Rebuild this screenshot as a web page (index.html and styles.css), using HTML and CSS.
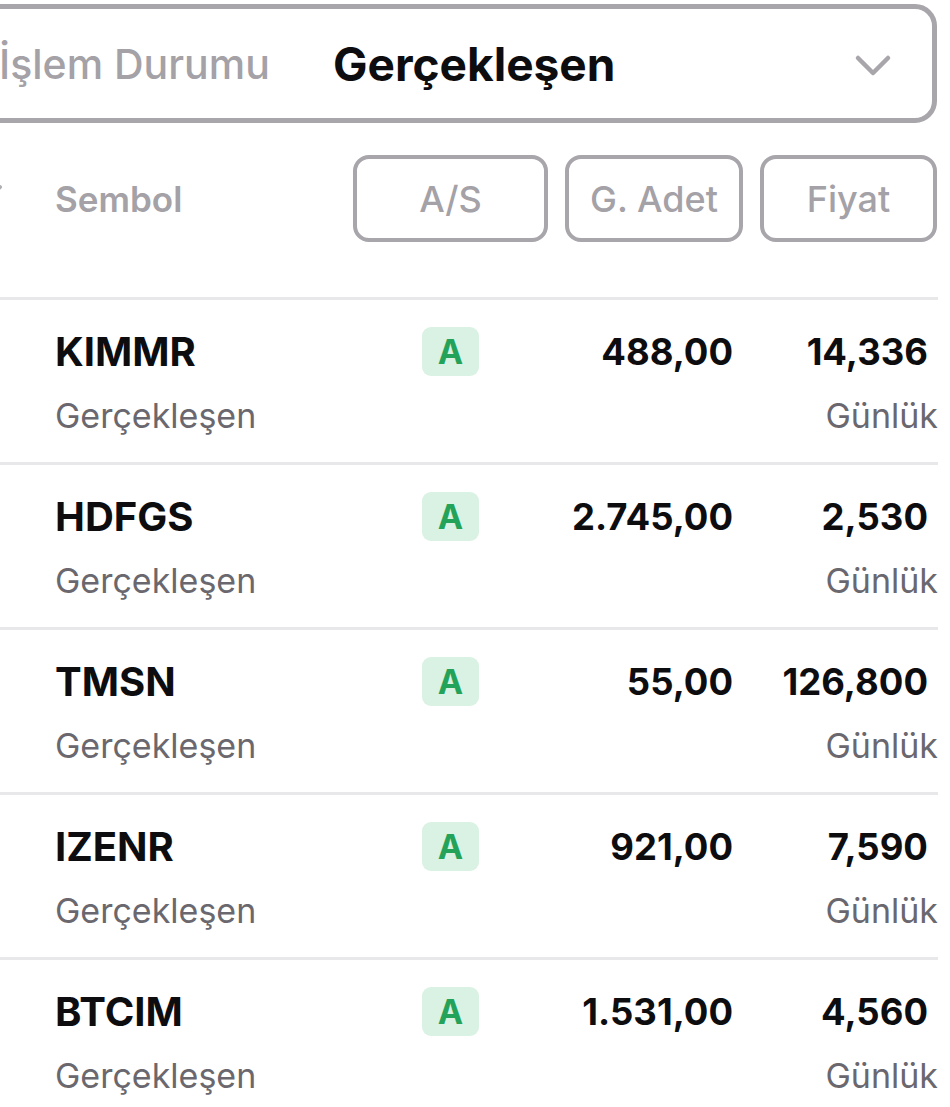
FILE: index.html
```html
<!DOCTYPE html>
<html lang="tr">
<head>
  <meta charset="UTF-8">
  <title>Emirler</title>
  <link rel="stylesheet" href="styles.css">
</head>
<body>
  <div class="screen">
    <div class="select">
      <span class="select-label">İşlem Durumu</span>
      <span class="select-value">Gerçekleşen</span>
      <svg class="chevron" width="38" height="24" viewBox="0 0 38 24">
        <path d="M4 4 L19 19 L34 4" fill="none" stroke="#a8a5ab" stroke-width="4.5" stroke-linecap="round" stroke-linejoin="round"/>
      </svg>
    </div>

    <div class="head">
      <svg class="sort-icon" width="20" height="20" viewBox="0 0 20 20">
        <path d="M4 14 L12 7" fill="none" stroke="#b0adb3" stroke-width="4" stroke-linecap="round"/>
      </svg>
      <span class="head-symbol">Sembol</span>
      <div class="head-btn btn-as">A/S</div>
      <div class="head-btn btn-qty">G. Adet</div>
      <div class="head-btn btn-price">Fiyat</div>
    </div>

    <div class="list">
      <div class="row">
        <div class="sym">KIMMR</div>
        <div class="badge">A</div>
        <div class="num">488,00</div>
        <div class="num">14,336</div>
        <div class="sub">Gerçekleşen</div>
        <div class="sub sub-right">Günlük</div>
      </div>
      <div class="row">
        <div class="sym">HDFGS</div>
        <div class="badge">A</div>
        <div class="num">2.745,00</div>
        <div class="num">2,530</div>
        <div class="sub">Gerçekleşen</div>
        <div class="sub sub-right">Günlük</div>
      </div>
      <div class="row">
        <div class="sym">TMSN</div>
        <div class="badge">A</div>
        <div class="num">55,00</div>
        <div class="num">126,800</div>
        <div class="sub">Gerçekleşen</div>
        <div class="sub sub-right">Günlük</div>
      </div>
      <div class="row">
        <div class="sym">IZENR</div>
        <div class="badge">A</div>
        <div class="num">921,00</div>
        <div class="num">7,590</div>
        <div class="sub">Gerçekleşen</div>
        <div class="sub sub-right">Günlük</div>
      </div>
      <div class="row">
        <div class="sym">BTCIM</div>
        <div class="badge">A</div>
        <div class="num">1.531,00</div>
        <div class="num">4,560</div>
        <div class="sub">Gerçekleşen</div>
        <div class="sub sub-right">Günlük</div>
      </div>
    </div>
  </div>
</body>
</html>
```

FILE: styles.css
```css
html, body { margin: 0; padding: 0; background: #fff; }
body { font-family: Inter, "Noto Sans", sans-serif; overflow: hidden; }
.screen { width: 950px; height: 1107px; overflow: hidden; }

.select { display: flex; align-items: center; height: 109px; margin: 4px 13px 0 -40px; padding: 0 40px 0 34px; border: 5px solid #a8a5ab; border-radius: 22px; }
.select-label { font-size: 41px; font-weight: 500; color: #a4a1a7; width: 334px; white-space: nowrap; }
.select-value { font-size: 46px; font-weight: 700; color: #0d0d0f; flex: 1; }
.chevron { margin-top: 4px; }

.head { display: flex; align-items: center; margin-top: 32px; padding-right: 13px; height: 87px; }
.sort-icon { margin-left: -12px; margin-right: 47px; margin-top: -18px; }
.head-symbol { flex: 1; font-size: 35px; font-weight: 600; color: #a4a1a7; }
.head-btn { box-sizing: border-box; height: 87px; border: 4px solid #a8a5ab; border-radius: 16px; display: flex; align-items: center; justify-content: center; font-size: 36px; font-weight: 500; color: #a4a1a7; }
.btn-as { width: 195px; }
.btn-qty { width: 178px; margin-left: 17px; }
.btn-price { width: 177px; margin-left: 17px; }

.list { margin-top: 55px; }
.row { box-sizing: border-box; height: 165px; width: 938px; border-top: 3px solid #e8e7e9; padding: 27px 10px 0 55px; display: grid; grid-template-columns: 367px 57px 254px 1fr; grid-template-rows: 64px 48px; }
.sym { font-size: 40px; font-weight: 700; color: #0d0d0f; line-height: 50px; }
.badge { width: 57px; height: 49px; border-radius: 9px; background: #d9f2e3; color: #23a35a; font-size: 34px; font-weight: 700; display: flex; align-items: center; justify-content: center; }
.num { text-align: right; font-size: 36.5px; font-weight: 700; color: #0d0d0f; line-height: 50px; }
.sub { grid-column: 1 / 4; font-size: 34px; color: #6a686e; line-height: 50px; }
.sub-right { grid-column: 4; text-align: right; margin-right: -10px; }
```
